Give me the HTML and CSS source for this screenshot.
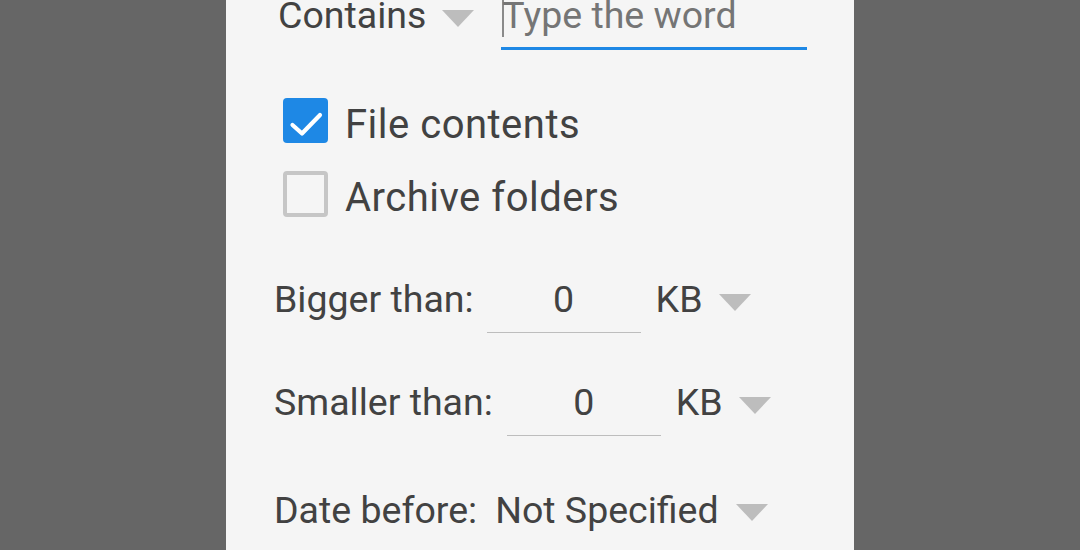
FILE: index.html
```html
<!DOCTYPE html>
<html>
<head>
<meta charset="utf-8">
<link rel="stylesheet" href="styles.css">
</head>
<body>
<div class="panel">
  <div class="row contains-row">
    <span class="label contains-label">Contains</span>
    <span class="arrow arrow-contains"></span>
    <div class="text-input">
      <span class="cursor"></span><span class="placeholder">Type the word</span>
    </div>
  </div>

  <div class="row check-row first">
    <span class="checkbox checked">
      <svg width="45" height="45" viewBox="0 0 45 45"><path d="M9.5 27 L19 35.5 L37 17" fill="none" stroke="#fff" stroke-width="4.2" stroke-linecap="round" stroke-linejoin="round"/></svg>
    </span>
    <span class="label check-label">File contents</span>
  </div>

  <div class="row check-row second">
    <span class="checkbox"></span>
    <span class="label check-label">Archive folders</span>
  </div>

  <div class="row size-row bigger">
    <span class="label">Bigger than:</span>
    <span class="num-input">0</span>
    <span class="unit">KB</span>
    <span class="arrow"></span>
  </div>

  <div class="row size-row smaller">
    <span class="label">Smaller than:</span>
    <span class="num-input">0</span>
    <span class="unit">KB</span>
    <span class="arrow"></span>
  </div>

  <div class="row date-row">
    <span class="label">Date before:</span>
    <span class="spinner-value">Not Specified</span>
    <span class="arrow"></span>
  </div>
</div>
</body>
</html>
```

FILE: styles.css
```css
html, body {
  margin: 0;
  padding: 0;
  height: 100%;
  overflow: hidden;
}
body {
  background: #666666;
  font-family: Roboto, "Noto Sans", sans-serif;
  font-size: 37.5px;
  line-height: 40px;
  color: #424242;
}
.panel {
  margin-left: 226px;
  width: 628px;
  height: 550px;
  background: #f5f5f5;
  overflow: hidden;
}
.row {
  display: flex;
  align-items: flex-start;
}
.label {
  white-space: nowrap;
}
.arrow {
  width: 0;
  height: 0;
  border-left: 16px solid transparent;
  border-right: 16px solid transparent;
  border-top: 17px solid #bdbdbd;
  margin-top: 15px;
}

/* Contains row */
.contains-row {
  line-height: 30px;
  padding-left: 52px;
}
.arrow-contains {
  margin-left: 16px;
  margin-top: 10px;
}
.text-input {
  margin-left: 27px;
  width: 306px;
  padding-bottom: 17px;
  border-bottom: 3px solid #1e88e5;
  display: flex;
  align-items: flex-start;
  color: #757575;
}
.cursor {
  width: 2px;
  height: 37px;
  background: #8a8a8a;
  margin-left: 1px;
  margin-right: -2px;
  margin-bottom: -7px;
}

/* Checkboxes */
.check-row {
  padding-left: 57px;
}
.check-row.first {
  margin-top: 48px;
}
.check-row.second {
  margin-top: 28px;
}
.checkbox {
  box-sizing: border-box;
  width: 45px;
  height: 46px;
  border-radius: 4px;
  border: 4px solid #c6c6c6;
  display: block;
  flex: none;
}
.checkbox.checked {
  background: #1e88e5;
  border: none;
  height: 45px;
}
.checkbox svg {
  display: block;
}
.check-label {
  font-size: 40px;
  letter-spacing: 0.5px;
  margin-left: 17px;
  margin-top: 7px;
  margin-bottom: -3px;
}

/* Size rows */
.size-row {
  padding-left: 48px;
}
.size-row.bigger {
  margin-top: 62px;
}
.size-row.smaller {
  margin-top: 49px;
}
.num-input {
  margin-left: 13px;
  width: 154px;
  text-align: center;
  padding-bottom: 13px;
  border-bottom: 1px solid #bdbdbd;
}
.smaller .num-input {
  margin-left: 14px;
}
.unit {
  margin-left: 15px;
}
.unit + .arrow {
  margin-left: 16px;
}

/* Date row */
.date-row {
  padding-left: 48px;
  margin-top: 54px;
}
.spinner-value {
  margin-left: 18px;
  white-space: nowrap;
}
.spinner-value + .arrow {
  margin-left: 17px;
  margin-top: 14px;
}
```
